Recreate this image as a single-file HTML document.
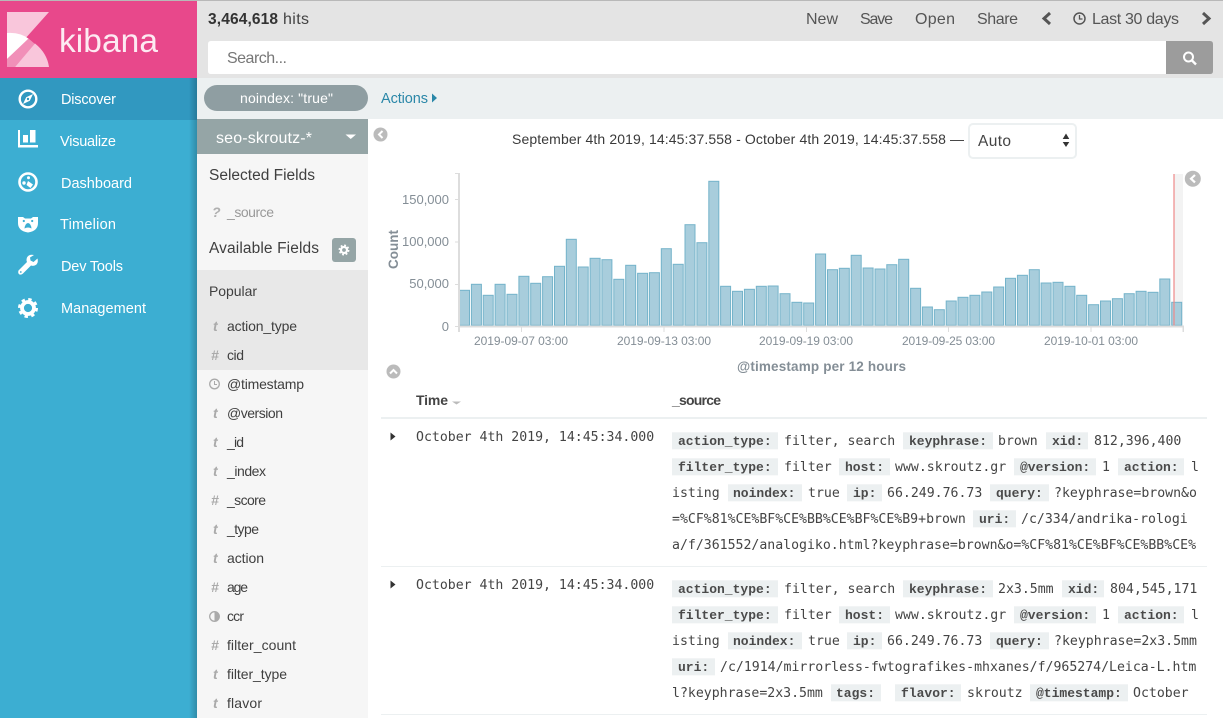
<!DOCTYPE html>
<html><head><meta charset="utf-8"><title>Kibana Discover</title>
<style>
html,body{margin:0;padding:0;width:1223px;height:718px;overflow:hidden;background:#fff}
svg{display:block}
text{font-family:"Liberation Sans",sans-serif;font-size:14.5px;fill:#444;white-space:pre}
.nav{fill:#fff;font-size:14.5px}
.f{fill:#3f3f3f}
.ty{font-weight:bold;font-style:italic;fill:#aaa;font-size:14px}
.m{font-family:"DejaVu Sans Mono",monospace;font-size:13.2px;fill:#444}
.k{font-family:"Liberation Mono",monospace;font-weight:bold;font-size:13px;fill:#4a4a4a}
.lb{fill:#ecf0f1}
.ax{fill:#848e96;font-size:12px}
.axb{fill:#848e96;font-weight:bold;font-size:13.5px}
.top{fill:#555;font-size:16px}
.bars rect{width:10px}
</style></head><body>
<svg width="1223" height="718" viewBox="0 0 1223 718" xmlns="http://www.w3.org/2000/svg">
<defs><linearGradient id="sh" x1="0" x2="1" y1="0" y2="0"><stop offset="0" stop-color="#000" stop-opacity="0"/><stop offset="1" stop-color="#000" stop-opacity=".2"/></linearGradient></defs>

<!-- main backgrounds -->
<rect x="197" y="0" width="1026" height="78" fill="#e4e4e4"/>
<rect x="197" y="78" width="1026" height="41" fill="#ecf0f1"/>
<rect x="197" y="119" width="171" height="599" fill="#f6f6f6"/>
<rect x="197" y="270" width="171" height="100" fill="#e8e8e8"/>
<rect x="197" y="119" width="171" height="35" fill="#95a5a6"/>

<!-- left nav -->
<rect x="0" y="0" width="197" height="718" fill="#3caed2"/>
<rect x="0" y="78" width="197" height="42" fill="#3198c0"/>
<rect x="0" y="0" width="197" height="78" fill="#e8488b"/>
<rect x="189" y="78" width="8" height="640" fill="url(#sh)"/>
<rect x="0" y="0" width="1223" height="1" fill="#b8b8b8"/>

<!-- logo -->
<path d="M7 12H49L7 59Z" fill="#f9c6db"/>
<path d="M7 33Q20 32 29 39L7 59Z" fill="#fff"/>
<path d="M28.500 38.500L35 44L15 67H7V59Z" fill="#f18fb8"/>
<path d="M35 43.500Q47 53 49 67H15Z" fill="#f9c6db"/>
<text x="59" y="52" style="font-size:33.500px;fill:#fdeaf2" textLength="99">kibana</text>

<!-- nav icons -->
<circle cx="28" cy="99" r="8.300" fill="none" stroke="#fff" stroke-width="2.400"/>
<path d="M33 94L29.800 100.800L23 104L26.200 97.200Z" fill="#fff"/>
<circle cx="28" cy="99" r="1.200" fill="#3198c0"/>
<path d="M18 130H20V145H38V147.500H18Z" fill="#fff"/>
<rect x="23" y="135" width="5" height="7.500" fill="#fff"/>
<rect x="30" y="130" width="5.500" height="12.500" fill="#fff"/>
<circle cx="28" cy="182" r="8.500" fill="none" stroke="#fff" stroke-width="2.600"/>
<circle cx="24" cy="183" r="1.700" fill="#fff"/>
<circle cx="28.500" cy="177.800" r="1.500" fill="#fff"/>
<path d="M28 181L33 184.500L30.500 188L26.500 185Z" fill="#fff"/>
<path d="M18 217H23L25 218.500H31L33 217H38V223Q38 231 28 232.500Q18 231 18 223Z" fill="#fff"/>
<circle cx="23.800" cy="221" r="1.100" fill="#3caed2"/><circle cx="32.200" cy="221" r="1.100" fill="#3caed2"/>
<path d="M24.500 228.500Q25 223.500 28 223Q31 223.500 31.500 228.500Q28 226.500 24.500 228.500Z" fill="#3caed2"/>
<path d="M37.500 258.500L33.500 262L30.500 260.500L30 257.500L34 255Q29 254 27 257.500Q26 260 27 262L18.500 270.500Q17.500 273 19.500 274.500Q21.500 275 23 273.500L31 265.500Q34 266.500 36.500 264.500Q38.500 262 37.500 258.500Z" fill="#fff"/>
<circle cx="20.800" cy="272" r=".9" fill="#3caed2"/>
<circle cx="28" cy="308" r="6" fill="none" stroke="#fff" stroke-width="3.800"/>
<circle cx="28" cy="308" r="8.700" fill="none" stroke="#fff" stroke-width="2.600" stroke-dasharray="3.400 3.430"/>

<!-- nav text -->
<text class="nav" x="61" y="104" textLength="55">Discover</text>
<text class="nav" x="60" y="146" textLength="56">Visualize</text>
<text class="nav" x="61" y="188" textLength="71">Dashboard</text>
<text class="nav" x="60" y="229" textLength="56">Timelion</text>
<text class="nav" x="61" y="271" textLength="62">Dev Tools</text>
<text class="nav" x="61" y="313" textLength="85">Management</text>

<!-- top bar -->
<text x="208" y="24" style="font-weight:bold;font-size:15.500px;fill:#333" textLength="70">3,464,618</text>
<text x="283" y="24" style="fill:#444;font-size:16px" textLength="26">hits</text>
<text class="top" x="806" y="24" textLength="32">New</text>
<text class="top" x="860" y="24" textLength="33">Save</text>
<text class="top" x="915" y="24" textLength="40">Open</text>
<text class="top" x="977" y="24" textLength="41">Share</text>
<path d="M1050 13L1044 18.500L1050 24" fill="none" stroke="#555" stroke-width="3"/>
<circle cx="1079.500" cy="18.500" r="5.500" fill="none" stroke="#555" stroke-width="1.500"/>
<path d="M1079.500 15V19H1082.500" fill="none" stroke="#555" stroke-width="1.300"/>
<text class="top" x="1092" y="24" textLength="87">Last 30 days</text>
<path d="M1203 13L1209 18.500L1203 24" fill="none" stroke="#555" stroke-width="3"/>

<!-- search -->
<path d="M211 41H1166V74H211Q208 74 208 71V44Q208 41 211 41Z" fill="#fff"/>
<text x="227" y="63" style="font-size:16px;fill:#777" textLength="60">Search...</text>
<path d="M1166 41H1210Q1213 41 1213 44V71Q1213 74 1210 74H1166Z" fill="#9c9c9c"/>
<circle cx="1188.500" cy="57" r="4.500" fill="none" stroke="#fff" stroke-width="2"/>
<path d="M1192 60.500L1196 64.500" stroke="#fff" stroke-width="2.400"/>

<!-- filter bar -->
<rect x="204" y="85" width="164" height="26" rx="13" fill="#8f9ea2"/>
<text x="240" y="103" style="fill:#fff;font-size:14px" textLength="93">noindex: "true"</text>
<text x="381" y="103" style="fill:#2a87a8;font-size:14.500px" textLength="47">Actions</text>
<path d="M432 93.500L437 98L432 102.500Z" fill="#2a87a8"/>

<!-- sidebar -->
<text x="216" y="143" style="fill:#fff;font-size:16px" textLength="96">seo-skroutz-*</text>
<path d="M345.500 134.500H356L350.700 139Z" fill="#fff"/>
<text class="f" x="209" y="180" style="font-size:15.500px" textLength="106">Selected Fields</text>
<text class="ty" x="212" y="217" style="fill:#b0b0b0">?</text>
<text x="227" y="217" style="fill:#999;font-size:14px" textLength="47">_source</text>
<text class="f" x="209" y="253" style="font-size:15.500px" textLength="110">Available Fields</text>
<rect x="332" y="238" width="24" height="24" rx="3" fill="#95a5a6"/>
<circle cx="344" cy="250" r="3" fill="none" stroke="#fff" stroke-width="2.200"/>
<circle cx="344" cy="250" r="4.700" fill="none" stroke="#fff" stroke-width="1.500" stroke-dasharray="1.900 1.790"/>
<text class="f" x="209" y="296" style="font-size:14px" textLength="48">Popular</text>

<text class="ty" x="213" y="331">t</text><text class="f" x="227" y="331" textLength="70" style="font-size:14px">action_type</text>
<text class="ty" x="211" y="360">#</text><text class="f" x="227" y="360" textLength="17" style="font-size:14px">cid</text>
<circle cx="214.500" cy="384" r="4.800" fill="none" stroke="#aaa" stroke-width="1.300"/><path d="M214.500 381V384.500H217" fill="none" stroke="#aaa" stroke-width="1"/>
<text class="f" x="227" y="389" textLength="77" style="font-size:14px">@timestamp</text>
<text class="ty" x="213" y="418">t</text><text class="f" x="227" y="418" textLength="56" style="font-size:14px">@version</text>
<text class="ty" x="213" y="447">t</text><text class="f" x="227" y="447" textLength="17" style="font-size:14px">_id</text>
<text class="ty" x="213" y="476">t</text><text class="f" x="227" y="476" textLength="39" style="font-size:14px">_index</text>
<text class="ty" x="211" y="505">#</text><text class="f" x="227" y="505" textLength="39" style="font-size:14px">_score</text>
<text class="ty" x="213" y="534">t</text><text class="f" x="227" y="534" textLength="32" style="font-size:14px">_type</text>
<text class="ty" x="213" y="563">t</text><text class="f" x="227" y="563" textLength="37" style="font-size:14px">action</text>
<text class="ty" x="211" y="592">#</text><text class="f" x="227" y="592" textLength="21" style="font-size:14px">age</text>
<circle cx="214.500" cy="616.500" r="4.800" fill="none" stroke="#aaa" stroke-width="1.300"/><path d="M214.500 611.700A4.800 4.800 0 0 1 214.500 621.300Z" fill="#aaa"/>
<text class="f" x="227" y="621" textLength="17" style="font-size:14px">ccr</text>
<text class="ty" x="211" y="650">#</text><text class="f" x="227" y="650" textLength="69" style="font-size:14px">filter_count</text>
<text class="ty" x="213" y="679">t</text><text class="f" x="227" y="679" textLength="60" style="font-size:14px">filter_type</text>
<text class="ty" x="213" y="708">t</text><text class="f" x="227" y="708" textLength="35" style="font-size:14px">flavor</text>

<!-- collapse buttons -->
<circle cx="380.500" cy="134.500" r="7" fill="#bbb"/><path d="M382.500 131L379 134.500L382.500 138" fill="none" stroke="#fff" stroke-width="2"/>
<circle cx="393.500" cy="371.500" r="7" fill="#bbb"/><path d="M390 373.500L393.500 370L397 373.500" fill="none" stroke="#fff" stroke-width="2"/>
<circle cx="1192.800" cy="178.700" r="8" fill="#bbb"/><path d="M1195 175L1191 178.700L1195 182.400" fill="none" stroke="#fff" stroke-width="2.200"/>

<!-- date header -->
<text x="512" y="144" style="fill:#3a3a3a;font-size:14px" textLength="452">September 4th 2019, 14:45:37.558 - October 4th 2019, 14:45:37.558 —</text>
<rect x="969" y="124" width="107" height="34" rx="4" fill="#fff" stroke="#ecf0f1" stroke-width="2"/>
<text x="978" y="146" style="fill:#444;font-size:15.500px" textLength="33">Auto</text>
<path d="M1062.700 139L1066 133.500L1069.300 139ZM1062.700 142L1066 147L1069.300 142Z" fill="#333"/>

<!-- chart -->
<rect x="1174" y="174" width="9" height="152" fill="#f3f3f3"/>
<g class="bars" fill="#a8cddc" stroke="#74b3ca" stroke-width="1">
<rect x="459.500" y="290.300" width="10.300" height="35"/><rect x="471.400" y="284.300" width="10.300" height="41"/><rect x="483.200" y="295.300" width="10.300" height="30"/><rect x="495.100" y="284.300" width="10.300" height="41"/><rect x="507" y="294.300" width="10.300" height="31"/><rect x="518.900" y="276.300" width="10.300" height="49"/><rect x="530.700" y="283.300" width="10.300" height="42"/><rect x="542.600" y="276.700" width="10.300" height="48.600"/><rect x="554.500" y="266.300" width="10.300" height="59"/><rect x="566.300" y="239.300" width="10.300" height="86"/><rect x="578.200" y="267" width="10.300" height="58.300"/><rect x="590.100" y="258.300" width="10.300" height="67"/><rect x="601.900" y="259.700" width="10.300" height="65.600"/><rect x="613.800" y="279.300" width="10.300" height="46"/><rect x="625.700" y="265.300" width="10.300" height="60"/><rect x="637.600" y="273.300" width="10.300" height="52"/><rect x="649.400" y="272.700" width="10.300" height="52.600"/><rect x="661.300" y="248.700" width="10.300" height="76.600"/><rect x="673.200" y="264.300" width="10.300" height="61"/><rect x="685" y="224.700" width="10.300" height="100.600"/><rect x="696.900" y="242.700" width="10.300" height="82.600"/><rect x="708.800" y="181.300" width="10.300" height="144"/><rect x="720.600" y="286.300" width="10.300" height="39"/><rect x="732.500" y="291.300" width="10.300" height="34"/><rect x="744.400" y="289.300" width="10.300" height="36"/><rect x="756.300" y="286.300" width="10.300" height="39"/><rect x="768.100" y="286" width="10.300" height="39.300"/><rect x="780" y="293.700" width="10.300" height="31.600"/><rect x="791.900" y="302.300" width="10.300" height="23"/><rect x="803.700" y="303" width="10.300" height="22.300"/><rect x="815.600" y="254" width="10.300" height="71.300"/><rect x="827.500" y="269.700" width="10.300" height="55.600"/><rect x="839.300" y="268.300" width="10.300" height="57"/><rect x="851.200" y="255.300" width="10.300" height="70"/><rect x="863.100" y="268" width="10.300" height="57.300"/><rect x="875" y="269" width="10.300" height="56.300"/><rect x="886.800" y="264.700" width="10.300" height="60.600"/><rect x="898.700" y="259.300" width="10.300" height="66"/><rect x="910.600" y="288.300" width="10.300" height="37"/><rect x="922.400" y="307" width="10.300" height="18.300"/><rect x="934.300" y="309.700" width="10.300" height="15.600"/><rect x="946.200" y="301" width="10.300" height="24.300"/><rect x="958" y="297.300" width="10.300" height="28"/><rect x="969.900" y="295.300" width="10.300" height="30"/><rect x="981.800" y="292" width="10.300" height="33.300"/><rect x="993.700" y="287" width="10.300" height="38.300"/><rect x="1005.500" y="278.300" width="10.300" height="47"/><rect x="1017.400" y="275.300" width="10.300" height="50"/><rect x="1029.300" y="269.700" width="10.300" height="55.600"/><rect x="1041.100" y="283" width="10.300" height="42.300"/><rect x="1053" y="282.300" width="10.300" height="43"/><rect x="1064.900" y="286.300" width="10.300" height="39"/><rect x="1076.700" y="295.300" width="10.300" height="30"/><rect x="1088.600" y="304.700" width="10.300" height="20.600"/><rect x="1100.500" y="301" width="10.300" height="24.300"/><rect x="1112.400" y="298.700" width="10.300" height="26.600"/><rect x="1124.200" y="293.700" width="10.300" height="31.600"/><rect x="1136.100" y="291.300" width="10.300" height="34"/><rect x="1148" y="292.300" width="10.300" height="33"/><rect x="1159.800" y="279" width="10.300" height="46.300"/><rect x="1171.700" y="302.300" width="10.300" height="23"/>
</g>
<rect x="1173" y="174" width="2" height="152" fill="#e88" fill-opacity=".6"/>
<g fill="#ddd">
<rect x="458" y="325.500" width="726" height="2"/>
<rect x="458" y="173" width="2" height="159"/>
<rect x="455" y="173" width="4" height="1"/><rect x="455" y="199" width="4" height="1"/><rect x="455" y="241.500" width="4" height="1"/><rect x="455" y="284" width="4" height="1"/><rect x="455" y="326" width="4" height="1"/>
<rect x="521" y="326" width="1" height="6"/><rect x="663.500" y="326" width="1" height="6"/><rect x="806" y="326" width="1" height="6"/><rect x="948" y="326" width="1" height="6"/><rect x="1090.500" y="326" width="1" height="6"/><rect x="1182.500" y="326" width="1.500" height="6"/>
</g>
<text class="ax" style="font-size:13px" x="449" y="204" text-anchor="end">150,000</text>
<text class="ax" style="font-size:13px" x="449" y="246" text-anchor="end">100,000</text>
<text class="ax" style="font-size:13px" x="449" y="288" text-anchor="end">50,000</text>
<text class="ax" style="font-size:13px" x="449" y="331" text-anchor="end">0</text>
<text class="axb" transform="translate(398,269) rotate(-90)" textLength="39">Count</text>
<text class="ax" x="474" y="345" textLength="94">2019-09-07 03:00</text>
<text class="ax" x="617" y="345" textLength="94">2019-09-13 03:00</text>
<text class="ax" x="759" y="345" textLength="94">2019-09-19 03:00</text>
<text class="ax" x="902" y="345" textLength="93">2019-09-25 03:00</text>
<text class="ax" x="1044" y="345" textLength="94">2019-10-01 03:00</text>
<text class="axb" x="737" y="371" textLength="169">@timestamp per 12 hours</text>

<!-- table -->
<text x="416" y="405" style="font-weight:bold;fill:#444;font-size:14px" textLength="32">Time</text>
<path d="M452 401.500H461L456.500 404.500Z" fill="#bbb"/>
<text x="672" y="405" style="font-weight:bold;fill:#444;font-size:14px" textLength="49">_source</text>
<rect x="381" y="417" width="826" height="2" fill="#ecf0f1"/>
<rect x="381" y="566" width="826" height="1" fill="#ecf0f1"/>
<rect x="381" y="714" width="826" height="1" fill="#ecf0f1"/>

<path d="M390.500 432.500L395.500 436.500L390.500 440.500Z" fill="#333"/>
<path d="M390.500 580.500L395.500 584.500L390.500 588.500Z" fill="#333"/>
<text class="m" x="416" y="441">October 4th 2019, 14:45:34.000</text>
<text class="m" x="416" y="589">October 4th 2019, 14:45:34.000</text>

<!-- row 1 -->
<g class="lb">
<rect x="672" y="432.300" width="106" height="17"/><rect x="903" y="432.300" width="90" height="17"/><rect x="1046" y="432.300" width="42" height="17"/>
<rect x="672" y="458.300" width="106" height="17"/><rect x="839" y="458.300" width="51" height="17"/><rect x="1014" y="458.300" width="82" height="17"/><rect x="1118" y="458.300" width="66" height="17"/>
<rect x="728" y="484.300" width="74" height="17"/><rect x="847" y="484.300" width="35" height="17"/><rect x="990" y="484.300" width="59" height="17"/>
<rect x="973" y="510.300" width="43" height="17"/>
</g>
<text class="k" x="678" y="445">action_type:</text><text class="m" x="784" y="445">filter, search</text>
<text class="k" x="909" y="445">keyphrase:</text><text class="m" x="998" y="445">brown</text>
<text class="k" x="1052" y="445">xid:</text><text class="m" x="1094" y="445">812,396,400</text>
<text class="k" x="678" y="471">filter_type:</text><text class="m" x="784" y="471">filter</text>
<text class="k" x="845" y="471">host:</text><text class="m" x="895" y="471">www.skroutz.gr</text>
<text class="k" x="1020" y="471">@version:</text><text class="m" x="1102" y="471">1</text>
<text class="k" x="1124" y="471">action:</text><text class="m" x="1191" y="471">l</text>
<text class="m" x="672" y="497">isting</text>
<text class="k" x="733" y="497">noindex:</text><text class="m" x="808" y="497">true</text>
<text class="k" x="853" y="497">ip:</text><text class="m" x="887" y="497">66.249.76.73</text>
<text class="k" x="996" y="497">query:</text><text class="m" x="1054" y="497">?keyphrase=brown&amp;o</text>
<text class="m" x="672" y="523">=%CF%81%CE%BF%CE%BB%CE%BF%CE%B9+brown</text>
<text class="k" x="979" y="523">uri:</text><text class="m" x="1021" y="523">/c/334/andrika-rologi</text>
<text class="m" x="672" y="549">a/f/361552/analogiko.html?keyphrase=brown&amp;o=%CF%81%CE%BF%CE%BB%CE%</text>

<!-- row 2 -->
<g class="lb">
<rect x="672" y="580.300" width="106" height="17"/><rect x="903" y="580.300" width="90" height="17"/><rect x="1062" y="580.300" width="42" height="17"/>
<rect x="672" y="606.300" width="106" height="17"/><rect x="839" y="606.300" width="51" height="17"/><rect x="1014" y="606.300" width="82" height="17"/><rect x="1118" y="606.300" width="66" height="17"/>
<rect x="728" y="632.300" width="74" height="17"/><rect x="847" y="632.300" width="35" height="17"/><rect x="990" y="632.300" width="59" height="17"/>
<rect x="672" y="658.300" width="43" height="17"/>
<rect x="831" y="684.300" width="50" height="17"/><rect x="895" y="684.300" width="66" height="17"/><rect x="1030" y="684.300" width="98" height="17"/>
</g>
<text class="k" x="678" y="593">action_type:</text><text class="m" x="784" y="593">filter, search</text>
<text class="k" x="909" y="593">keyphrase:</text><text class="m" x="998" y="593">2x3.5mm</text>
<text class="k" x="1068" y="593">xid:</text><text class="m" x="1110" y="593">804,545,171</text>
<text class="k" x="678" y="619">filter_type:</text><text class="m" x="784" y="619">filter</text>
<text class="k" x="845" y="619">host:</text><text class="m" x="895" y="619">www.skroutz.gr</text>
<text class="k" x="1020" y="619">@version:</text><text class="m" x="1102" y="619">1</text>
<text class="k" x="1124" y="619">action:</text><text class="m" x="1191" y="619">l</text>
<text class="m" x="672" y="645">isting</text>
<text class="k" x="733" y="645">noindex:</text><text class="m" x="808" y="645">true</text>
<text class="k" x="853" y="645">ip:</text><text class="m" x="887" y="645">66.249.76.73</text>
<text class="k" x="996" y="645">query:</text><text class="m" x="1054" y="645">?keyphrase=2x3.5mm</text>
<text class="k" x="678" y="671">uri:</text><text class="m" x="720" y="671">/c/1914/mirrorless-fwtografikes-mhxanes/f/965274/Leica-L.htm</text>
<text class="m" x="672" y="697">l?keyphrase=2x3.5mm</text>
<text class="k" x="836" y="697">tags:</text>
<text class="k" x="901" y="697">flavor:</text><text class="m" x="967" y="697">skroutz</text>
<text class="k" x="1036" y="697">@timestamp:</text><text class="m" x="1133" y="697">October</text>
</svg>
</body></html>
